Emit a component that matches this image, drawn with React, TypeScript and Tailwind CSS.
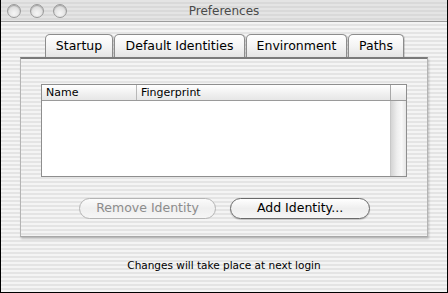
import React from "react";

const stripes =
  "bg-[repeating-linear-gradient(180deg,#f4f4f4_0px,#f4f4f4_2px,#e4e4e4_2px,#e4e4e4_4px)]";

function Light() {
  return (
    <div className="w-[14px] h-[14px] rounded-full border border-[#9a9a9a] bg-[radial-gradient(circle_at_50%_70%,#f6f6f6,#d0d0d0)] shadow-[inset_0_1px_1px_rgba(0,0,0,0.25)]" />
  );
}

function Tab({ label, w }: { label: string; w: string }) {
  return (
    <div
      className={`${w} h-[23px] flex items-center justify-center rounded-t-[5px] border border-b-0 border-[#8c8c8c] bg-[linear-gradient(180deg,#ffffff,#f4f4f4_50%,#e4e4e4)] text-[12.5px] text-black shadow-[1px_0_0_rgba(0,0,0,0.15)]`}
    >
      {label}
    </div>
  );
}

export default function App() {
  return (
    <div
      className="w-[448px] h-[293px] flex flex-col border-x border-b border-black overflow-hidden"
      style={{ fontFamily: '"DejaVu Sans", "Liberation Sans", sans-serif' }}
    >
      {/* title bar */}
      <div className="relative h-[22px] shrink-0 flex items-center bg-[repeating-linear-gradient(180deg,#e4e4e4_0px,#e4e4e4_2px,#d9d9d9_2px,#d9d9d9_4px)] border-b border-[#9c9c9c]">
        <div className="flex gap-[9px] pl-[6px]">
          <Light />
          <Light />
          <Light />
        </div>
        <div className="absolute inset-0 flex items-center justify-center text-[12px] text-[#4a4a4a]">
          Preferences
        </div>
      </div>

      {/* body */}
      <div className={`flex-1 flex flex-col ${stripes}`}>
        <div className="flex justify-center gap-[1px] pt-[12px] pl-[1px]">
          <Tab label="Startup" w="w-[68px]" />
          <Tab label="Default Identities" w="w-[131px]" />
          <Tab label="Environment" w="w-[101px]" />
          <Tab label="Paths" w="w-[56px]" />
        </div>

        <div
          className={`mx-[19px] h-[180px] border-t-2 border-t-[#7a7a7a] border-x border-x-[#b4b4b4] border-b border-b-[#a8a8a8] shadow-[1px_2px_2px_rgba(0,0,0,0.2)] ${stripes} flex flex-col`}
        >
          {/* table */}
          <div className="mt-[25px] mx-[20px] h-[93px] border border-[#8e8e8e] bg-white flex flex-col">
            <div className="h-[16px] flex border-b border-[#9a9a9a] bg-[linear-gradient(180deg,#ffffff,#f2f2f2_50%,#e6e6e6)] text-[11px] text-black">
              <div className="w-[95px] pl-[4px] border-r border-[#b8b8b8] leading-[15px]">Name</div>
              <div className="flex-1 pl-[4px] leading-[15px]">Fingerprint</div>
              <div className="w-[16px] border-l border-[#a8a8a8]" />
            </div>
            <div className="flex-1 flex">
              <div className="flex-1" />
              <div className="w-[16px] bg-[linear-gradient(90deg,#d4d4d4,#eeeeee_40%,#f8f8f8_70%,#e6e6e6)] border-l border-[#c8c8c8]" />
            </div>
          </div>

          {/* buttons */}
          <div className="mt-[21px] flex pl-[58px] gap-[14px]">
            <div className="w-[137px] h-[21px] rounded-full border border-[#b4b4b4] bg-[linear-gradient(180deg,#fbfbfb,#efefef_50%,#f6f6f6)] flex items-center justify-center text-[12.5px] text-[#8c8c8c]">
              Remove Identity
            </div>
            <div className="w-[140px] h-[21px] rounded-full border border-[#6a6a6a] bg-[linear-gradient(180deg,#ffffff,#eeeeee_50%,#f6f6f6)] shadow-[0_1px_1px_rgba(0,0,0,0.2)] flex items-center justify-center text-[12.5px] text-black">
              Add Identity...
            </div>
          </div>
        </div>

        <div className="mt-[21px] flex justify-center text-[10.5px] text-black">
          Changes will take place at next login
        </div>
      </div>
    </div>
  );
}
